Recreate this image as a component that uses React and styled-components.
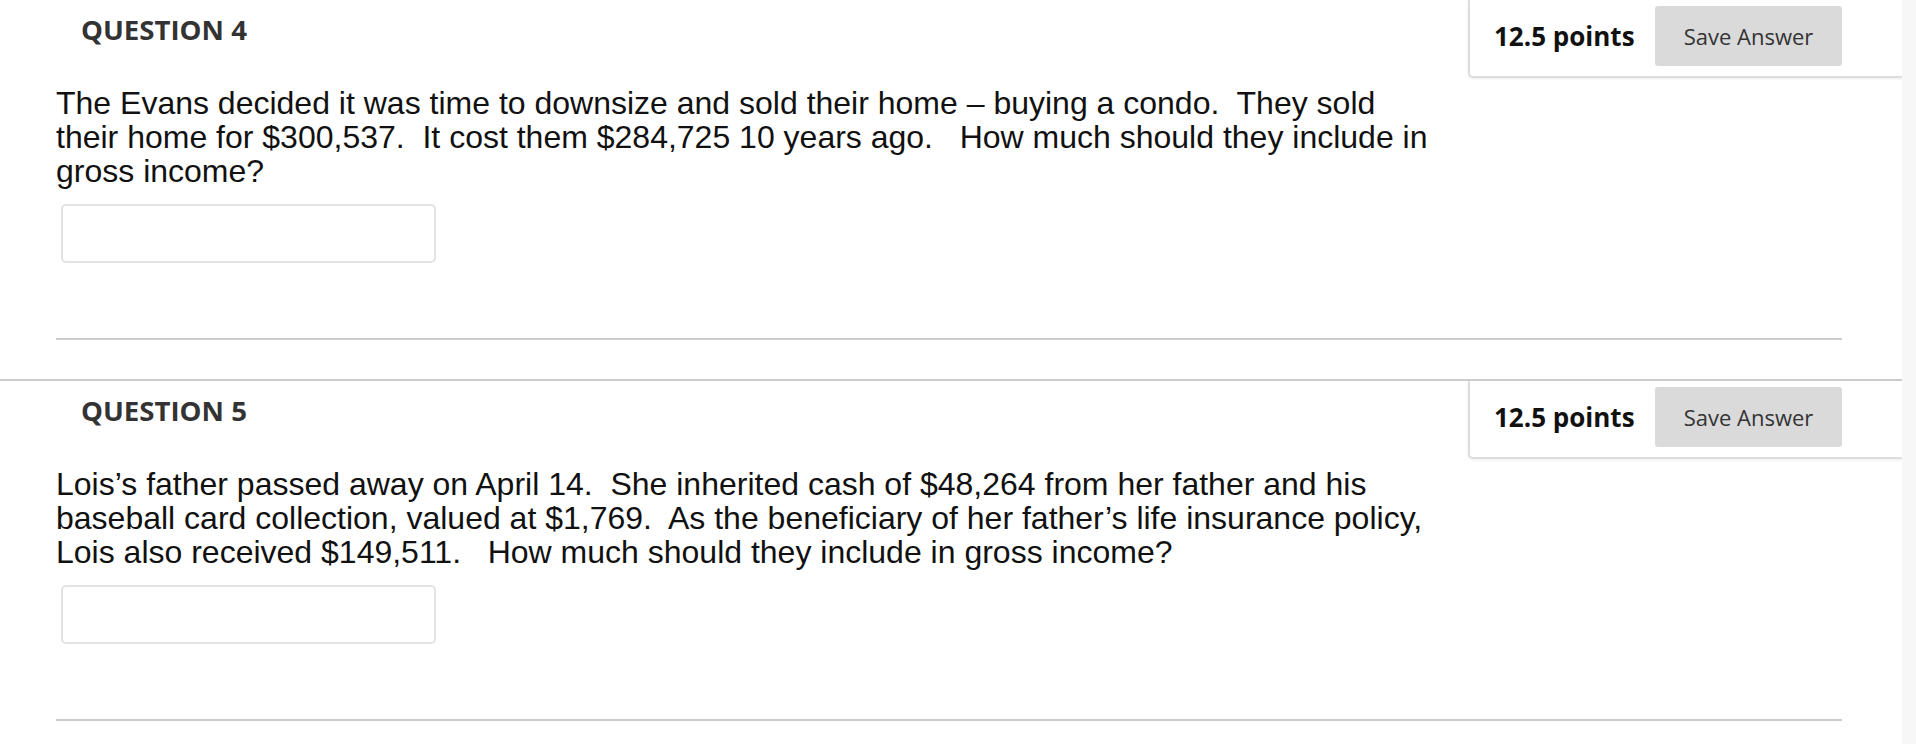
import React from "react";
import styled, { createGlobalStyle } from "styled-components";

const GlobalStyle = createGlobalStyle`
  html, body {
    margin: 0;
    padding: 0;
    background: #ffffff;
    overflow: hidden;
  }
`;

const Page = styled.div`
  display: flex;
  width: 1916px;
  height: 744px;
  overflow: hidden;
`;

const Content = styled.div`
  width: 1902px;
  margin-top: -2px;
`;

const Scrollbar = styled.div`
  width: 14px;
  background: #f7f7f7;
`;

const Question = styled.section`
  border-top: 2px solid #cccccc;
  padding-bottom: 39px;
`;

const Header = styled.div`
  display: flex;
  justify-content: space-between;
  align-items: flex-start;
`;

const Heading = styled.h2`
  margin: 0;
  padding: 10px 0 0 81px;
  font-family: "Open Sans", sans-serif;
  font-weight: 700;
  font-size: 27.6px;
  color: #333333;
`;

const PointsBox = styled.div`
  display: flex;
  align-items: center;
  width: 434px;
  box-sizing: border-box;
  padding: 6px 60px 10px 24px;
  border-left: 2px solid #dddddd;
  border-bottom: 2px solid #dddddd;
  border-bottom-left-radius: 5px;
  box-shadow: 0 1px 3px rgba(0, 0, 0, 0.08);
  background: #ffffff;
`;

const Points = styled.span`
  font-family: "Open Sans", sans-serif;
  font-weight: 700;
  font-size: 26px;
  color: #111111;
  white-space: nowrap;
`;

const SaveButton = styled.button`
  margin-left: auto;
  width: 187px;
  height: 60px;
  border: none;
  border-radius: 3px;
  background: #dadada;
  font-family: "Open Sans", sans-serif;
  font-size: 22px;
  color: #333333;
  cursor: pointer;
`;

const Body = styled.div`
  padding: 8px 0 0 56px;
`;

const Prompt = styled.p`
  margin: 0;
  width: 1382px;
  font-family: "Liberation Sans", Arial, sans-serif;
  font-size: 32px;
  line-height: 34px;
  color: #111111;
`;

const AnswerInput = styled.input`
  display: block;
  box-sizing: border-box;
  width: 375px;
  height: 59px;
  margin: 16px 0 0 5px;
  border: 2px solid #e3e3e3;
  border-radius: 5px;
  background: #ffffff;
`;

const Divider = styled.hr`
  margin: 75px 60px 0 0;
  border: none;
  border-top: 2px solid #cccccc;
`;

const questions = [
  {
    n: 4,
    text:
      "The Evans decided it was time to downsize and sold their home \u2013 buying a condo.\u00a0 They sold their home for $300,537.\u00a0 It cost them $284,725 10 years ago.\u00a0\u00a0 How much should they include in gross income?",
  },
  {
    n: 5,
    text:
      "Lois\u2019s father passed away on April 14.\u00a0 She inherited cash of $48,264 from her father and his baseball card collection, valued at $1,769.\u00a0 As the beneficiary of her father\u2019s life insurance policy, Lois also received $149,511.\u00a0\u00a0 How much should they include in gross income?",
  },
];

export default function App() {
  return (
    <Page>
      <GlobalStyle />
      <Content>
        {questions.map((q) => (
          <Question key={q.n}>
            <Header>
              <Heading>QUESTION {q.n}</Heading>
              <PointsBox>
                <Points>12.5 points</Points>
                <SaveButton>Save Answer</SaveButton>
              </PointsBox>
            </Header>
            <Body>
              <Prompt>{q.text}</Prompt>
              <AnswerInput type="text" />
              <Divider />
            </Body>
          </Question>
        ))}
      </Content>
      <Scrollbar />
    </Page>
  );
}
